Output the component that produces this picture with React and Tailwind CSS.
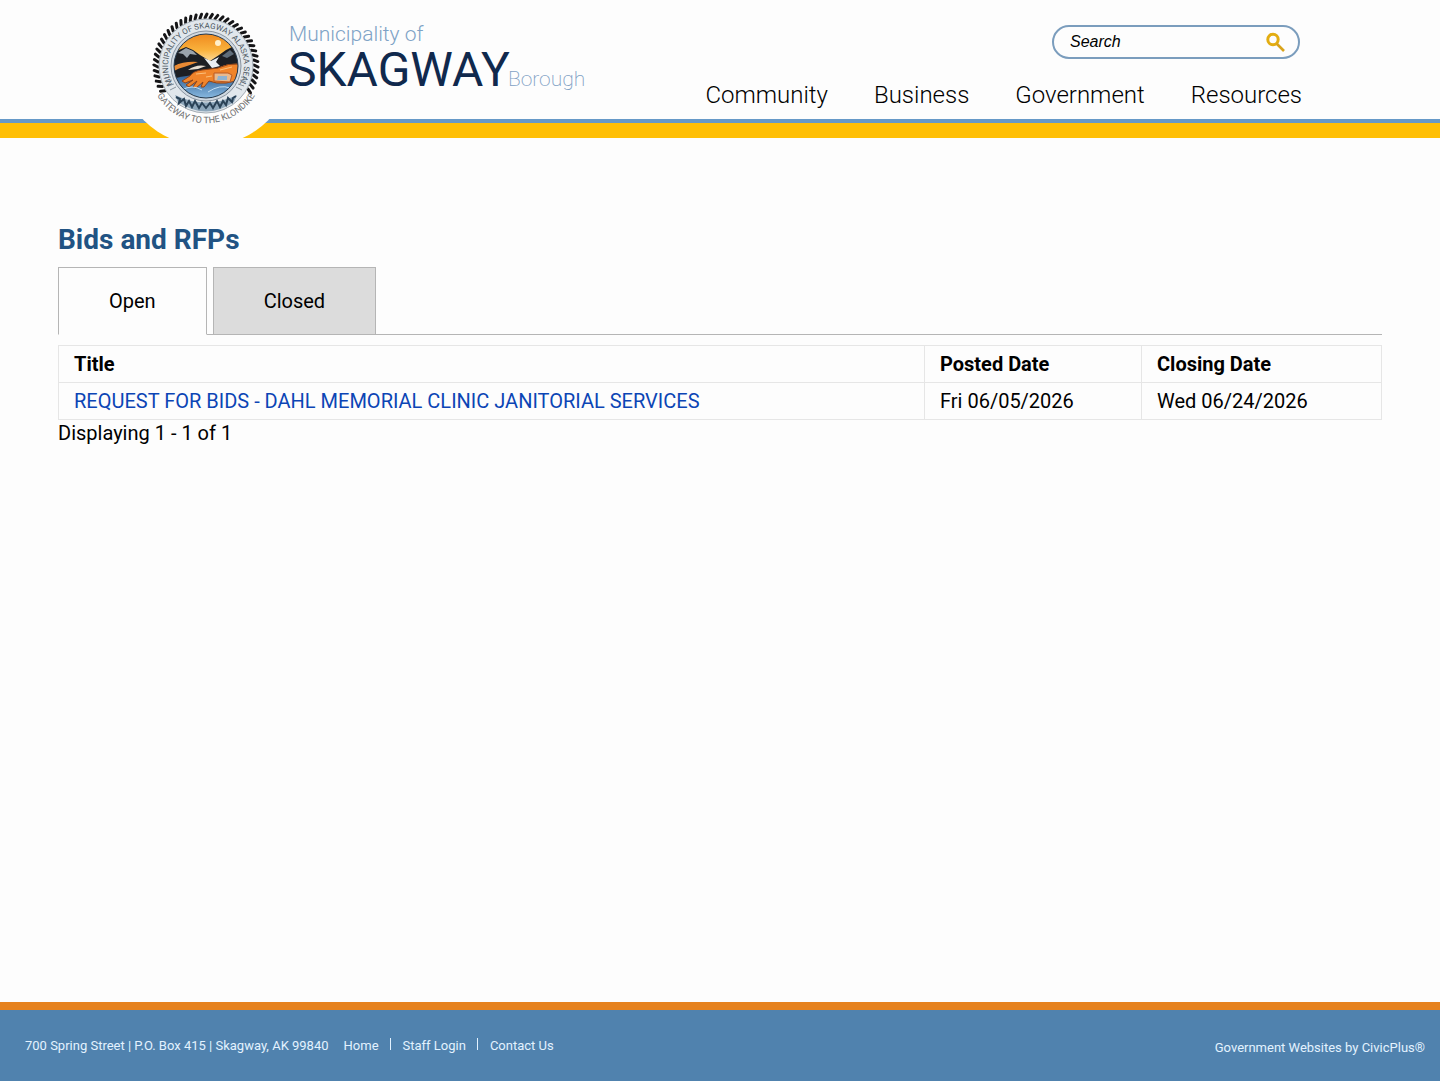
import React from 'react';

const navItems = ['Community', 'Business', 'Government', 'Resources'];

const footerLinks = ['Home', 'Staff Login', 'Contact Us'];

const bids = [
  {
    title: 'REQUEST FOR BIDS - DAHL MEMORIAL CLINIC JANITORIAL SERVICES',
    posted: 'Fri 06/05/2026',
    closing: 'Wed 06/24/2026',
  },
];

// Rope beads around the seal, open at the bottom for the motto
const beads = Array.from({ length: 41 }, (_, i) => -120 + i * 6);

const Seal = () => (
  <svg viewBox="0 0 140 138" className="relative z-10 h-[138px] w-[140px] shrink-0" role="img" aria-label="Skagway seal">
    <defs>
      <path id="seal-top" d="M42 92 A38 38 0 1 1 98 92" />
      <path id="seal-bottom" d="M22 97 A57 57 0 0 0 118 97" />
      <clipPath id="seal-scene">
        <circle cx="70" cy="66" r="32" />
      </clipPath>
      <linearGradient id="seal-sky" x1="0" y1="0" x2="0" y2="1">
        <stop offset="0" stopColor="#f08a1e" />
        <stop offset="0.25" stopColor="#f9b13c" />
        <stop offset="0.4" stopColor="#fdd58a" />
      </linearGradient>
      <linearGradient id="seal-water" x1="0" y1="0" x2="0" y2="1">
        <stop offset="0" stopColor="#2f5f94" />
        <stop offset="1" stopColor="#8fc0e6" />
      </linearGradient>
    </defs>
    <circle cx="70" cy="58" r="88" fill="#fdfdfd" />
    {beads.map((angle) => (
      <path
        key={angle}
        d="M69 18 L71 14"
        stroke="#161618"
        strokeWidth="3"
        strokeLinecap="round"
        transform={`rotate(${angle} 70 66)`}
      />
    ))}
    <circle cx="70" cy="66" r="47" fill="#e1e7ec" stroke="#a3acb4" strokeWidth="1" />
    <circle cx="70" cy="66" r="35" fill="#cfd8e0" stroke="#8994a0" strokeWidth="1" />
    <g clipPath="url(#seal-scene)">
      <rect x="38" y="34" width="64" height="64" fill="url(#seal-sky)" />
      <circle cx="82" cy="43" r="3" fill="#fff0cc" />
      <path d="M36 56 L43 50 L50 47 L57 50 L64 55 L74 61 L83 55 L90 50 L96 47 L104 54 V78 H36 Z" fill="#1c1f24" />
      <path d="M42 53 L50 48 L57 51 L61 55 L54 54 L51 58 L47 54 Z" fill="#9aa3ab" />
      <path d="M86 56 L94 50 L98 54 L91 58 Z" fill="#5f6d7a" />
      <path d="M68 58 L75 61 L83 57 L80 62 L84 66 L76 68 L72 63 Z" fill="#e9eef2" />
      <path d="M38 66 Q48 61 62 62 Q54 65 48 67 Q43 68 38 71 Z" fill="#e88a34" />
      <path d="M52 70 Q60 64 70 66 L62 69 Z" fill="#e6ddd0" />
      <path d="M36 79 Q58 72 104 76 V100 H36 Z" fill="url(#seal-water)" />
      <path d="M104 64 Q92 63 82 68 L66 70 Q57 71 54 76 L46 81 L49 83 L57 80 L50 85 L53 87 L61 81 L57 87 L60 88 L67 82 L65 87 L68 87 L73 81 Q80 84 90 83 L100 81 Z" fill="#f0842a" stroke="#8f4318" strokeWidth="1" />
      <path d="M78 73 H92 L96 75 L94 82 L78 81 Z" fill="#e9b98c" stroke="#bb5b23" strokeWidth="1" />
      <path d="M82 76 H91 V80 H81 Z" fill="#8fb2cf" />
      <path d="M60 74 L70 73 M70 77 L76 76 M84 70 L96 67" fill="none" stroke="#fbc07c" strokeWidth="1" />
      <path d="M46 90 Q56 84 66 90 M72 92 Q84 84 94 88" fill="none" stroke="#c4dff3" strokeWidth="1" />
    </g>
    <circle cx="70" cy="66" r="32" fill="none" stroke="#22384f" strokeWidth="1" />
    <path d="M39 95 Q70 110 101 95 L98 102 Q70 121 42 102 Z" fill="#8da6ba" />
    <path
      d="M40 97 l4 2 l-1 4 l5 -4 l2 7 l3 -5 l3 6 l3 -6 l4 7 l3 -5 l4 5 l4 -5 l3 5 l4 -7 l3 6 l3 -6 l3 4 l2 -7 l4 4 l1 -4 l3 -2"
      fill="none"
      stroke="#2a4257"
      strokeWidth="2"
    />
    <path d="M29 78 l6 -1 M30 82 l6 -2 M32 86 l6 -2 M34 90 l6 -3 M111 78 l-6 -1 M110 82 l-6 -2 M108 86 l-6 -2 M106 90 l-6 -3" stroke="#88939c" strokeWidth="1" />
    <text fontSize="8" fill="#4d5862">
      <textPath href="#seal-top" startOffset="50%" textAnchor="middle">MUNICIPALITY OF SKAGWAY ALASKA SEAL</textPath>
    </text>
    <text fontSize="9" fill="#6f6f6f">
      <textPath href="#seal-bottom" startOffset="50%" textAnchor="middle">GATEWAY TO THE KLONDIKE</textPath>
    </text>
  </svg>
);

const SearchIcon = () => (
  <svg viewBox="0 0 20 20" className="h-5 w-5" fill="none" aria-hidden="true">
    <circle cx="7" cy="7.5" r="5.2" stroke="#e3ad12" strokeWidth="3" />
    <path d="M10.5 11.5 L18 19" stroke="#d9a31a" strokeWidth="2.6" />
  </svg>
);

const Header = () => (
  <header>
    <div className="flex h-[119px] items-start justify-between pr-[138px] pl-[136px]">
      <a href="#" className="flex items-start">
        <Seal />
        <span className="block pt-5 pl-3">
          <span className="block pl-px text-[21px] leading-7 font-light text-[#7fa3c6]">Municipality of</span>
          <span className="flex items-baseline leading-11">
            <span className="text-5xl leading-11 text-[#10294d]">SKAGWAY</span>
            <span className="-ml-0.5 text-[21px] font-extralight text-[#7fa0c4]">Borough</span>
          </span>
        </span>
      </a>
      <div className="flex flex-col items-end pt-[25px]">
        <form className="mr-0.5 flex h-[34px] w-[248px] items-center rounded-full border-2 border-[#7b9dbd] pr-3 pl-4">
          <input
            type="text"
            aria-label="Search"
            placeholder="Search"
            className="min-w-0 flex-1 font-['Liberation_Sans',sans-serif] text-base text-black italic outline-none placeholder:text-black"
          />
          <button type="submit" aria-label="Submit search">
            <SearchIcon />
          </button>
        </form>
        <nav className="flex gap-[46px] pt-5">
          {navItems.map((item) => (
            <a key={item} href="#" className="text-2xl leading-8 font-light text-black">
              {item}
            </a>
          ))}
        </nav>
      </div>
    </div>
    <div className="h-1 bg-[#6699c8]" />
    <div className="h-[15px] bg-[#ffbf05]" />
  </header>
);

const BidsTable = () => (
  <table className="mt-2.5 w-full border-collapse text-left text-xl leading-9">
    <thead>
      <tr>
        <th className="border border-[#e6e6e6] px-[15px] font-bold">Title</th>
        <th className="w-[217px] border border-[#e6e6e6] px-[15px] font-bold">Posted Date</th>
        <th className="w-[240px] border border-[#e6e6e6] px-[15px] font-bold">Closing Date</th>
      </tr>
    </thead>
    <tbody>
      {bids.map((bid) => (
        <tr key={bid.title}>
          <td className="border border-[#e6e6e6] px-[15px]">
            <a href="#" className="text-[#0c45b5]">{bid.title}</a>
          </td>
          <td className="border border-[#e6e6e6] px-[15px]">{bid.posted}</td>
          <td className="border border-[#e6e6e6] px-[15px]">{bid.closing}</td>
        </tr>
      ))}
    </tbody>
  </table>
);

const Footer = () => (
  <footer className="flex h-[79px] items-center justify-between border-t-8 border-[#e6821e] bg-[#5082ae] pr-[15px] pl-[25px] text-[13px] leading-5 text-[#e3f2ff]">
    <div className="flex items-center gap-[15px]">
      <span>700 Spring Street | P.O. Box 415 | Skagway, AK 99840</span>
      <ul className="flex items-center">
        {footerLinks.map((link, index) => (
          <li key={link} className={index > 0 ? 'flex items-center' : ''}>
            {index > 0 && <span className="mr-3 mb-1 ml-[11px] h-3 w-px bg-[#e3f2ff]" />}
            <a href="#">{link}</a>
          </li>
        ))}
      </ul>
    </div>
    <a href="#" className="pt-1">Government Websites by CivicPlus®</a>
  </footer>
);

const App = () => (
  <div className="flex min-h-screen flex-col bg-[#fdfdfd] font-['Roboto',sans-serif] text-black">
    <Header />
    <main className="flex-1 px-[58px] pt-[84px]">
      <h1 className="text-[28px] leading-9 font-bold text-[#215383]">Bids and RFPs</h1>

      {/* Tabs */}
      <div className="mt-[9px] flex gap-1.5 border-b border-[#b5b5b5] text-xl" role="tablist">
        <button type="button" role="tab" aria-selected="true" className="-mb-px h-[68px] border border-[#b5b5b5] border-b-[#fdfdfd] bg-[#fdfdfd] px-[50px]">
          Open
        </button>
        <button type="button" role="tab" aria-selected="false" className="h-[67px] border border-b-0 border-[#b5b5b5] bg-[#dcdcdc] px-[50px]">
          Closed
        </button>
      </div>

      <BidsTable />
      <p className="text-xl leading-[26px]">Displaying 1 - 1 of 1</p>
    </main>
    <Footer />
  </div>
);

export default App;
